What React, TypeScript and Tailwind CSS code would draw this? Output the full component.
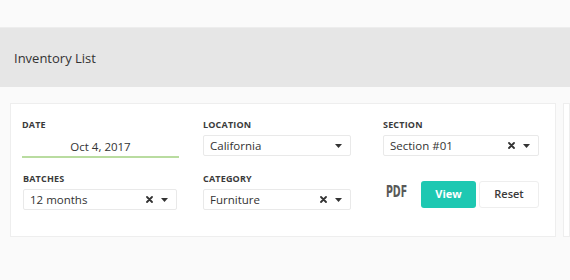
const FONT = "font-['Open_Sans','Liberation_Sans',sans-serif]"

const LABEL = "text-[9px] font-bold uppercase leading-[12px] tracking-[0.02em] text-[#3a3a3a]"

function Caret() {
  return (
    <svg width="7" height="4" viewBox="0 0 7 4" aria-hidden>
      <path d="M0 0h7L3.5 4z" fill="#333" />
    </svg>
  )
}

function Clear() {
  return (
    <svg width="7" height="7" viewBox="0 0 7 7" aria-hidden>
      <path d="M1 1l5 5M6 1l-5 5" stroke="#333" strokeWidth="1.8" strokeLinecap="round" />
    </svg>
  )
}

function Select({ value, clearable = false }: { value: string; clearable?: boolean }) {
  return (
    <div className="flex h-[21px] items-center rounded-[2px] border border-[#e9e9e9] bg-white pl-[6px] pr-[8px]">
      <span className="flex-1 whitespace-nowrap text-[11.5px] leading-[15px] text-[#333]">{value}</span>
      {clearable && (
        <span className="mr-[8px] flex items-center">
          <Clear />
        </span>
      )}
      <Caret />
    </div>
  )
}

function Field({ label, children }: { label: string; children: React.ReactNode }) {
  return (
    <div className="flex flex-col gap-[4px]">
      <p className={LABEL}>{label}</p>
      {children}
    </div>
  )
}

export default function App() {
  return (
    <main className={`min-h-[280px] w-[570px] overflow-hidden bg-[#fafafa] ${FONT}`}>
      <div className="h-[27px]" />
      <header className="flex h-[60px] items-center border-t border-[#ededed] bg-[#e6e6e6] px-[14px]">
        <h1 className="pt-[2px] text-[13px] text-[#333]">Inventory List</h1>
      </header>

      <div className="flex gap-[7px] pl-[10px] pt-[16px]">
        <section className="w-[546px] shrink-0 border border-[#eeeeee] bg-white pb-[26px] pl-[11px] pt-[15px]">
          <div className="grid grid-cols-[157px_172px_188px] gap-y-[15px]">
            <Field label="Date">
              <div className="flex h-[23px] items-end justify-center border-b-2 border-[#b9dca0] pb-[2px] text-[11.5px] leading-[15px] text-[#333]">
                Oct 4, 2017
              </div>
            </Field>
            <div className="pl-[24px]">
              <Field label="Location">
                <Select value="California" />
              </Field>
            </div>
            <div className="pl-[32px]">
              <Field label="Section">
                <Select value="Section #01" clearable />
              </Field>
            </div>

            <div className="pl-[1px] pr-[2px]">
              <Field label="Batches">
                <Select value="12 months" clearable />
              </Field>
            </div>
            <div className="pl-[24px]">
              <Field label="Category">
                <Select value="Furniture" clearable />
              </Field>
            </div>
            <div className="flex items-start pl-[32px] pt-[8px]">
              <span className="flex h-[27px] w-[28px] items-center justify-center pb-[4px]">
                <span className="inline-block scale-x-[0.57] font-['DejaVu_Sans',sans-serif] text-[16.5px] font-bold leading-none text-[#585858]">
                  PDF
                </span>
              </span>
              <button className="ml-[10px] h-[27px] w-[55px] rounded-[3px] bg-[#1ec8b2] text-[11px] font-bold text-white">
                View
              </button>
              <button className="ml-[3px] h-[27px] w-[60px] rounded-[3px] border border-[#eeeeee] bg-white text-[11px] font-semibold text-[#3a3a3a]">
                Reset
              </button>
            </div>
          </div>
        </section>
        <section className="flex-1 border border-[#eeeeee] bg-white" />
      </div>
    </main>
  )
}
